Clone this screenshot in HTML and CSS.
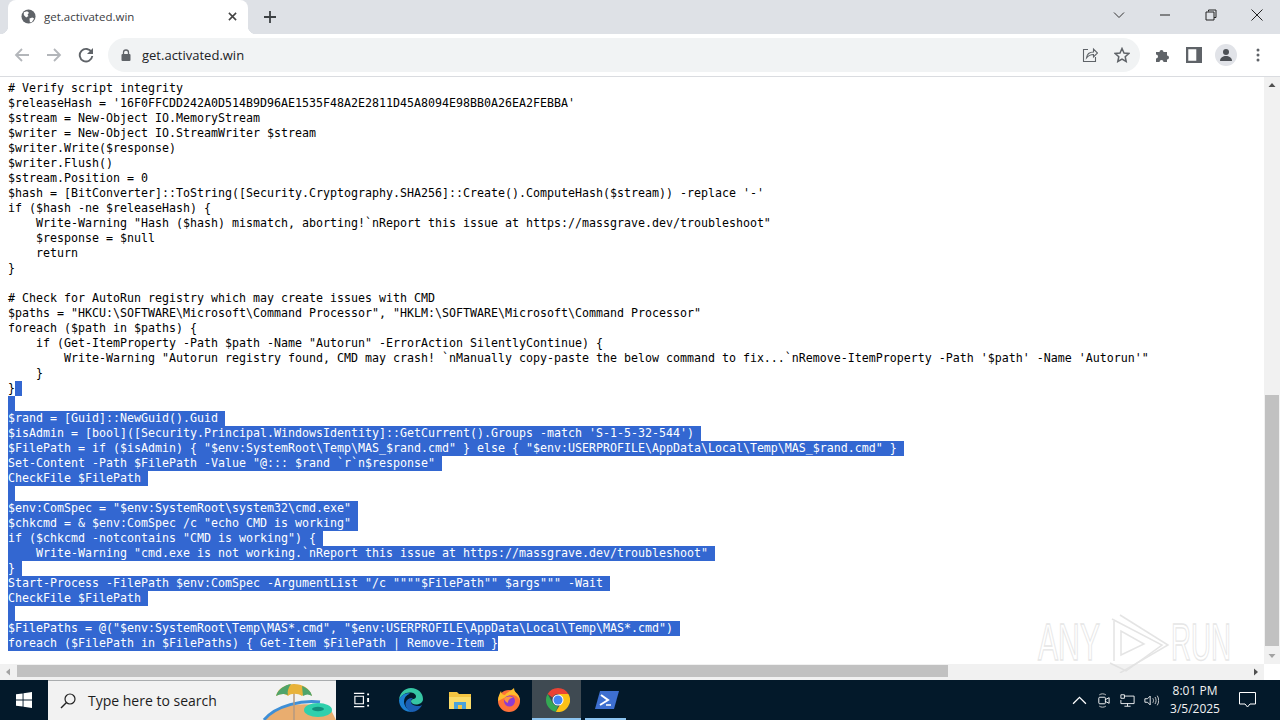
FILE: index.html
```html
<!DOCTYPE html>
<html lang="en">
<head>
<meta charset="utf-8">
<title>get.activated.win</title>
<link rel="stylesheet" href="styles.css">
</head>
<body>
<div class="window">
  <header class="tabstrip">
    <div class="tab">
      <svg class="favicon" viewBox="0 0 16 16"><circle cx="8" cy="8" r="7.5" fill="#5f6368"/><path d="M3 3.5 6.5 2.5 8.500 4 7 6 8 7.500 5.500 9 3 6.500ZM9 10l3-1 2 1-2.500 4L9.500 14Z" fill="#fff"/></svg>
      <span class="tab-title">get.activated.win</span>
      <svg class="tab-close" viewBox="0 0 10 10"><path d="M1 1l8 8M9 1l-8 8" stroke="#444" stroke-width="1.700"/></svg>
    </div>
    <button class="newtab"><svg viewBox="0 0 14 14"><path d="M7 1v12M1 7h12" stroke="#3c4043" stroke-width="1.800"/></svg></button>
    <div class="winctrls">
      <span class="winbtn"><svg viewBox="0 0 12 12"><path d="M1 3.500l5 5 5-5" fill="none" stroke="#333" stroke-width="1"/></svg></span>
      <span class="winbtn"><svg viewBox="0 0 12 12"><path d="M1 6h10" stroke="#222" stroke-width="1"/></svg></span>
      <span class="winbtn"><svg viewBox="0 0 12 12"><path d="M3.500 2.500V1h7.500v7.500H9M1 3h8v8H1Z" fill="none" stroke="#222" stroke-width="1"/></svg></span>
      <span class="winbtn"><svg viewBox="0 0 12 12"><path d="M.5.500l11 11M11.500.500l-11 11" stroke="#222" stroke-width="1"/></svg></span>
    </div>
  </header>

  <nav class="toolbar">
    <span class="navbtn"><svg viewBox="0 0 16 16"><path d="M15 8H2M8 2 2 8l6 6" fill="none" stroke="#b3b6ba" stroke-width="1.800"/></svg></span>
    <span class="navbtn"><svg viewBox="0 0 16 16"><path d="M1 8h13M8 2l6 6-6 6" fill="none" stroke="#b3b6ba" stroke-width="1.800"/></svg></span>
    <span class="navbtn"><svg viewBox="0 0 16 16"><path d="M13.600 5.200A6.300 6.300 0 1 0 14.300 9" fill="none" stroke="#5f6368" stroke-width="1.900"/><path d="M15 1v6H9Z" fill="#5f6368"/></svg></span>
    <div class="omnibox">
      <svg class="lock" viewBox="0 0 10 12"><path d="M2.500 5V3.500a2.500 2.500 0 0 1 5 0V5" fill="none" stroke="#5f6368" stroke-width="1.300"/><rect x="0.500" y="5" width="9" height="7" rx="1" fill="#5f6368"/></svg>
      <span class="url">get.activated.win</span>
      <svg class="omni-icon" viewBox="0 0 16 16"><path d="M6 2.500H1.500v12h12V10" fill="none" stroke="#5f6368" stroke-width="1.100"/><path d="M4.500 11c.5-4 3.500-6 7-6V2l4 4-4 4V7.500c-3 0-5 1-7 3.500Z" fill="none" stroke="#5f6368" stroke-width="1.100"/></svg>
      <svg class="omni-icon" viewBox="0 0 16 16"><path d="M8 1.500l2 4.500 4.800.5-3.600 3.200 1 4.800L8 12.100 3.800 14.500l1-4.800L1.200 6.500 6 6Z" fill="none" stroke="#5f6368" stroke-width="1.500"/></svg>
    </div>
    <span class="navbtn puzzle"><svg viewBox="0 0 16 16"><path d="M1 5h3.500a2 2 0 1 1 4 0H12v3.500a2 2 0 1 1 0 4V15H8.500a2 2 0 1 0-4 0H1v-3.500a2 2 0 1 0 0-4Z" fill="#5f6368"/></svg></span>
    <span class="navbtn"><svg viewBox="0 0 14 14"><path d="M0 0h14v14H0ZM2 2v10h7V2Z" fill="#5f6368" fill-rule="evenodd"/></svg></span>
    <span class="navbtn"><span class="avatar"><svg viewBox="0 0 14 14"><circle cx="7" cy="4" r="3" fill="#4d5156"/><path d="M1 13c0-3.500 3-5 6-5s6 1.500 6 5Z" fill="#4d5156"/></svg></span></span>
    <span class="navbtn"><svg class="dots" viewBox="0 0 4 14"><circle cx="2" cy="2" r="1.500" fill="#5f6368"/><circle cx="2" cy="7" r="1.500" fill="#5f6368"/><circle cx="2" cy="12" r="1.500" fill="#5f6368"/></svg></span>
  </nav>

  <main class="viewport">
    <div class="page">
      <div class="code">
        <div class="line"># Verify script integrity</div>
        <div class="line">$releaseHash = '16F0FFCDD242A0D514B9D96AE1535F48A2E2811D45A8094E98BB0A26EA2FEBBA'</div>
        <div class="line">$stream = New-Object IO.MemoryStream</div>
        <div class="line">$writer = New-Object IO.StreamWriter $stream</div>
        <div class="line">$writer.Write($response)</div>
        <div class="line">$writer.Flush()</div>
        <div class="line">$stream.Position = 0</div>
        <div class="line">$hash = [BitConverter]::ToString([Security.Cryptography.SHA256]::Create().ComputeHash($stream)) -replace '-'</div>
        <div class="line">if ($hash -ne $releaseHash) {</div>
        <div class="line">    Write-Warning "Hash ($hash) mismatch, aborting!`nReport this issue at https://massgrave.dev/troubleshoot"</div>
        <div class="line">    $response = $null</div>
        <div class="line">    return</div>
        <div class="line">}</div>
        <div class="line"></div>
        <div class="line"># Check for AutoRun registry which may create issues with CMD</div>
        <div class="line">$paths = "HKCU:\SOFTWARE\Microsoft\Command Processor", "HKLM:\SOFTWARE\Microsoft\Command Processor"</div>
        <div class="line">foreach ($path in $paths) {</div>
        <div class="line">    if (Get-ItemProperty -Path $path -Name "Autorun" -ErrorAction SilentlyContinue) {</div>
        <div class="line">        Write-Warning "Autorun registry found, CMD may crash! `nManually copy-paste the below command to fix...`nRemove-ItemProperty -Path '$path' -Name 'Autorun'"</div>
        <div class="line">    }</div>
        <div class="line">}<span class="sel"> </span></div>
        <div class="line"><span class="sel"> </span></div>
        <div class="line"><span class="sel">$rand = [Guid]::NewGuid().Guid </span></div>
        <div class="line"><span class="sel">$isAdmin = [bool]([Security.Principal.WindowsIdentity]::GetCurrent().Groups -match 'S-1-5-32-544') </span></div>
        <div class="line"><span class="sel">$FilePath = if ($isAdmin) { "$env:SystemRoot\Temp\MAS_$rand.cmd" } else { "$env:USERPROFILE\AppData\Local\Temp\MAS_$rand.cmd" } </span></div>
        <div class="line"><span class="sel">Set-Content -Path $FilePath -Value "@::: $rand `r`n$response" </span></div>
        <div class="line"><span class="sel">CheckFile $FilePath </span></div>
        <div class="line"><span class="sel"> </span></div>
        <div class="line"><span class="sel">$env:ComSpec = "$env:SystemRoot\system32\cmd.exe" </span></div>
        <div class="line"><span class="sel">$chkcmd = &amp; $env:ComSpec /c "echo CMD is working" </span></div>
        <div class="line"><span class="sel">if ($chkcmd -notcontains "CMD is working") { </span></div>
        <div class="line"><span class="sel">    Write-Warning "cmd.exe is not working.`nReport this issue at https://massgrave.dev/troubleshoot" </span></div>
        <div class="line"><span class="sel">} </span></div>
        <div class="line"><span class="sel">Start-Process -FilePath $env:ComSpec -ArgumentList "/c """"$FilePath"" $args""" -Wait </span></div>
        <div class="line"><span class="sel">CheckFile $FilePath </span></div>
        <div class="line"><span class="sel"> </span></div>
        <div class="line"><span class="sel">$FilePaths = @("$env:SystemRoot\Temp\MAS*.cmd", "$env:USERPROFILE\AppData\Local\Temp\MAS*.cmd") </span></div>
        <div class="line"><span class="sel">foreach ($FilePath in $FilePaths) { Get-Item $FilePath | Remove-Item }</span></div>
      </div>
    </div>
    <div class="vscroll">
      <svg class="arrow" viewBox="0 0 16 16"><path d="M4.500 10 8 6l3.500 4Z" fill="#505050"/></svg>
      <div class="vtrack"><div class="vthumb"></div></div>
      <svg class="arrow" viewBox="0 0 16 16"><path d="M4.500 6 8 10l3.500-4Z" fill="#a3a3a3"/></svg>
    </div>
    <div class="hscroll">
      <svg class="arrow" viewBox="0 0 16 16"><path d="M10 4.500 6 8l4 3.500Z" fill="#a3a3a3"/></svg>
      <div class="htrack"><div class="hthumb"></div></div>
      <svg class="arrow" viewBox="0 0 16 16"><path d="M6 4.500 10 8l-4 3.500Z" fill="#505050"/></svg>
    </div>
    <div class="corner"></div>
    <svg class="watermark" viewBox="0 0 200 64">
      <g fill="#fff" stroke="#e2e2e2" stroke-width="1.300">
        <text transform="translate(2 51) scale(.58 1)" font-size="52">ANY</text>
        <text transform="translate(135 51) scale(.533 1)" font-size="52">RUN</text>
      </g>
      <g fill="none" stroke="#e0e0e0" stroke-width="1.500">
        <path d="M76 10 126 36 90 62 74 54"/>
        <path d="M84 6 132 36 84 64"/>
        <path d="M78 12V52M85 22V46L108 35Z"/>
      </g>
    </svg>
  </main>

  <footer class="taskbar">
    <span class="start"><svg viewBox="0 0 16 16"><path d="M0 2.300 6.600 1.400V7.500H0ZM7.500 1.300 16 0V7.500H7.500ZM0 8.500H6.600V14.600L0 13.700ZM7.500 8.500H16V16L7.500 14.700Z" fill="#fff"/></svg></span>
    <div class="search">
      <svg class="mag" viewBox="0 0 16 16"><circle cx="10" cy="6" r="5" fill="none" stroke="#222" stroke-width="1.200"/><path d="M6.500 9.500 1 15" stroke="#222" stroke-width="1.500"/></svg>
      <span class="search-text">Type here to search</span>
      <svg class="beach" viewBox="0 0 78 39">
        <path d="M6 39C18 24 45 19 72 27L78 39Z" fill="#e9ad6f"/>
        <path d="M6 39C18 24 45 19 62 21" fill="none" stroke="#3f8fd6" stroke-width="3"/>
        <path d="M36 3V39" stroke="#b59a80" stroke-width="1.500"/>
        <path d="M18 15C20 6 30 3 36 3C44 3 52 7 54 15C50 12 46 13 44 15C40 12 33 12 30 15C26 12 22 13 18 15Z" fill="#e8b23a"/>
        <path d="M18 15C20 8 27 4 33 3C30 7 29 11 30 14C26 12 22 13 18 15Z" fill="#4fa46b"/>
        <path d="M44 5C49 7 53 10 54 15C51 13 48 13 45 15Z" fill="#4fa46b"/>
        <ellipse cx="60" cy="29" rx="14" ry="7" fill="#2fd0ac"/>
        <ellipse cx="60" cy="28" rx="6" ry="2.200" fill="#138f7d"/>
      </svg>
    </div>
    <span class="task"><svg class="taskview" viewBox="0 0 18 16"><path d="M1 1h11M1 15h11M2 4h9v8H2Z" fill="none" stroke="#fff" stroke-width="1.200"/><path d="M15 1h2v2h-2ZM15 6h2v4h-2ZM15 13h2v2h-2Z" fill="#fff"/></svg></span>
    <span class="task"><svg viewBox="0 0 24 24"><path d="M12 0C19 0 24 5 24 11C24 15 20 16.500 17 16.500C14 16.500 12 15 12 13.500C12 10 17 12 17 8.500C17 6 14 4.500 11 4.500C6 4.500 2 8 0 12C0.500 5 5.500 0 12 0Z" fill="#36c6a4"/><path d="M0 12C2 7 7 4.500 11 5.500C7 7 5 10 5 13.500C5 18 8.500 22 13 23.500C6 25 0 19 0 12Z" fill="#1c7fd0"/><path d="M12 13.500C12 17 16 18 19 18C21 18 22.500 17.500 23 17C21 21 17 24 13 24C9 23 6 19 6.500 15C7.500 11 11 9.500 14 10C12.500 11 12 12 12 13.500Z" fill="#1a5fb4"/></svg></span>
    <span class="task"><svg viewBox="0 0 24 22"><path d="M1 3h8l2 2h12v15H1Z" fill="#f4c542"/><path d="M1 8h22v12H1Z" fill="#fbdc6a"/><path d="M6 13h12v7H6Z" fill="#4aa2dc"/><path d="M10 16h4v4h-4Z" fill="#f4c542"/></svg></span>
    <span class="task"><svg viewBox="0 0 24 24"><circle cx="12" cy="13" r="11" fill="#ff7139"/><path d="M1 13C1 8 3 5 4 3C4.500 6 6 7 8 7C10 4 14 3 17 0C17 3 19 5 21 7C23 10 23 13 23 13C21 8 17 6 13 7Z" fill="#ffbd2e"/><circle cx="12.500" cy="13" r="5.500" fill="#8e3bd1"/><path d="M7 11C9 8 14 8 16 10C13 10 11 12 11 15C9 14 8 13 7 11Z" fill="#ff9640"/></svg></span>
    <span class="task active"><svg viewBox="0 0 24 24"><path d="M12 0A12 12 0 0 1 22.400 6H12A6 6 0 0 0 6.500 9.500L1.600 6A12 12 0 0 1 12 0Z" fill="#ea4335"/><path d="M1.600 6 6.800 15A6 6 0 0 0 12 18L9.800 23.800A12 12 0 0 1 1.600 6Z" fill="#34a853"/><path d="M22.400 6A12 12 0 0 1 9.800 23.800L15 15A6 6 0 0 0 15 9L12 6Z" fill="#fbc116"/><circle cx="12" cy="12" r="5.500" fill="#fff"/><circle cx="12" cy="12" r="4.500" fill="#4285f4"/></svg></span>
    <span class="task running"><svg viewBox="0 0 24 20"><path d="M5 1h19l-5 18H0Z" fill="#3d6fd0"/><path d="M6 5l7 5-8 5" fill="none" stroke="#fff" stroke-width="2"/><path d="M11 15h5" stroke="#fff" stroke-width="1.500"/></svg></span>
    <div class="tray">
      <span class="tray-icon"><svg viewBox="0 0 14 8"><path d="M1 7l6-6 6 6" fill="none" stroke="#fff" stroke-width="1.200"/></svg></span>
      <span class="tray-icon"><svg viewBox="0 0 14 16"><rect x="2" y="4.500" width="7" height="7" rx="1" fill="none" stroke="#fff"/><path d="M9 7l4-2v6L9 9" fill="none" stroke="#fff"/><path d="M2.500 2c2-1.500 5-1.500 7 0M2.500 14c2 1.500 5 1.500 7 0" fill="none" stroke="#ccc"/></svg></span>
      <span class="tray-icon"><svg viewBox="0 0 17 15"><path d="M4.500 2.500H16V11H1V7" fill="none" stroke="#fff"/><path d="M1 1h4v4H1ZM8.500 11v3M5 14h7" fill="none" stroke="#fff"/></svg></span>
      <span class="tray-icon"><svg viewBox="0 0 17 14"><path d="M1 5h3l3-3v10L4 9H1Z" fill="none" stroke="#fff"/><path d="M10 4.500c1 1.500 1 3.500 0 5M12.500 3c1.600 2.500 1.600 5.500 0 8M15 1.500c2.200 3.500 2.200 7.500 0 11" fill="none" stroke="#ddd"/></svg></span>
      <div class="clock"><span>8:01 PM</span><span>3/5/2025</span></div>
      <span class="notify"><svg viewBox="0 0 17 16"><path d="M.5.500h16V12h-5.500L8.500 15 6 12H.5Z" fill="none" stroke="#fff"/></svg></span>
    </div>
  </footer>
</div>
</body>
</html>
```
FILE: styles.css
```css
* { box-sizing: border-box; }
html, body { margin: 0; padding: 0; height: 100%; overflow: hidden; }
body { font-family: "Open Sans", "Liberation Sans", sans-serif; background: #fff; }
svg { display: block; }
button { border: 0; background: none; padding: 0; }

.window { width: 1280px; height: 720px; display: flex; flex-direction: column; overflow: hidden; }

.tabstrip { height: 34px; flex: none; display: flex; align-items: stretch; padding-left: 8px; background: #dee1e6; }
.tab { width: 240px; background: #fff; border-radius: 8px 8px 0 0; display: flex; align-items: center; padding: 0 11px 1px 13px; position: relative; }
.tab::before, .tab::after { content: ""; position: absolute; bottom: 0; width: 8px; height: 8px; }
.tab::before { left: -8px; background: radial-gradient(circle at 0 0, transparent 8px, #fff 8.500px); }
.tab::after { right: -8px; background: radial-gradient(circle at 100% 0, transparent 8px, #fff 8.500px); }
.favicon { width: 15px; height: 15px; flex: none; }
.tab-title { margin-left: 8px; font-size: 11.5px; color: #3c4043; flex: 1; }
.tab-close { width: 9px; height: 9px; flex: none; }
.newtab { width: 44px; display: flex; align-items: center; justify-content: center; }
.newtab svg { width: 14px; height: 14px; }
.winctrls { margin-left: auto; display: flex; }
.winbtn { width: 46px; display: flex; align-items: center; justify-content: center; padding-bottom: 4px; }
.winbtn svg { width: 12px; height: 12px; }

.toolbar { height: 43px; flex: none; display: flex; align-items: center; padding: 0 6px; background: #fff; border-bottom: 1px solid #dadce0; }
.navbtn { width: 32px; height: 32px; flex: none; display: flex; align-items: center; justify-content: center; }
.navbtn svg { width: 16px; height: 16px; }
.navbtn .dots { width: 4px; height: 14px; }
.puzzle { padding-left: 1px; }
.omnibox { height: 34px; width: 1032px; flex: none; margin: 0 6px 0 6px; border-radius: 17px; background: #f1f3f4; display: flex; align-items: center; padding: 0 10px 0 13px; }
.lock { width: 10px; height: 12px; flex: none; }
.url { margin-left: 11px; font-size: 13px; color: #202124; flex: 1; }
.omni-icon { width: 16px; height: 16px; flex: none; margin-left: 16px; }
.avatar { width: 22px; height: 22px; border-radius: 50%; background: #e1e3e8; display: flex; align-items: center; justify-content: center; }
.navbtn .avatar svg { width: 14px; height: 14px; }

.viewport { flex: 1; min-height: 0; position: relative; display: grid; grid-template-columns: 1fr 16px; grid-template-rows: 1fr 16px; background: #fff; }
.page { overflow: hidden; min-width: 0; min-height: 0; }
.code { padding: 4px 0 0 8px; font-family: "DejaVu Sans Mono", "Liberation Mono", monospace; font-size: 11.64px; line-height: 15px; color: #000; }
.line { height: 15px; white-space: pre; }
.sel { display: inline-block; height: 15px; vertical-align: top; background: #3367d1; color: #fff; white-space: pre; }

.vscroll { display: flex; flex-direction: column; background: #f1f1f1; }
.vtrack { flex: 1; padding-top: 302px; }
.vthumb { height: 251px; margin: 0 1px; background: #c1c1c1; }
.hscroll { display: flex; background: #f1f1f1; }
.htrack { flex: 1; padding: 1px 0 3px 1px; }
.hthumb { width: 931px; height: 12px; background: #c1c1c1; }
.arrow { width: 16px; height: 16px; flex: none; }
.corner { background: #fff; }
.watermark { position: absolute; left: 1036px; top: 532px; width: 200px; height: 64px; font-family: "Liberation Sans", sans-serif; opacity: .85; }

.taskbar { height: 40px; flex: none; display: flex; align-items: center; background: #03192a; }
.start { width: 48px; height: 40px; flex: none; display: flex; align-items: center; justify-content: center; }
.start svg { width: 16px; height: 16px; }
.search { width: 288px; height: 40px; flex: none; display: flex; align-items: center; padding-left: 12px; background: #f2f2f2; border-top: 1px solid #a9acae; position: relative; overflow: hidden; }
.mag { width: 16px; height: 16px; flex: none; }
.search-text { margin-left: 12px; font-size: 14px; color: #1c1c1c; }
.beach { position: absolute; right: 0; bottom: 0; width: 78px; height: 39px; }
.task { width: 49px; height: 40px; flex: none; display: flex; align-items: center; justify-content: center; padding-left: 2px; }
.task svg { width: 24px; height: 24px; }
.task .taskview { width: 17px; height: 16px; }
.active { background: #3f4a52; box-shadow: inset 0 -2px 0 #8cc4f0; }
.running { box-shadow: inset 0 -2px 0 #8cc4f0; clip-path: inset(0 4px 0 4px); }
.tray { margin-left: auto; display: flex; align-items: center; height: 40px; padding-right: 13px; }
.tray-icon { width: 24px; height: 40px; display: flex; align-items: center; justify-content: center; }
.tray-icon svg { width: 15px; height: 15px; }
.clock { width: 64px; display: flex; flex-direction: column; align-items: center; gap: 2px; font-size: 12px; line-height: 16px; color: #f2f2f2; }
.notify { width: 40px; height: 40px; display: flex; align-items: center; justify-content: center; }
.notify svg { width: 17px; height: 16px; }
```
